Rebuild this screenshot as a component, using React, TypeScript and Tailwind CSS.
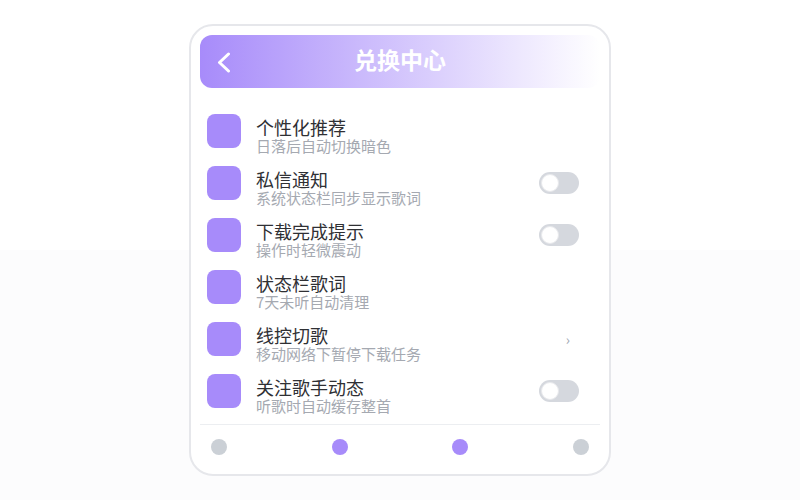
import React from "react";

type Row = { title: string; sub: string; kind: "none" | "toggle" | "chevron" };

const rows: Row[] = [
  { title: "个性化推荐", sub: "日落后自动切换暗色", kind: "none" },
  { title: "私信通知", sub: "系统状态栏同步显示歌词", kind: "toggle" },
  { title: "下载完成提示", sub: "操作时轻微震动", kind: "toggle" },
  { title: "状态栏歌词", sub: "7天未听自动清理", kind: "none" },
  { title: "线控切歌", sub: "移动网络下暂停下载任务", kind: "chevron" },
  { title: "关注歌手动态", sub: "听歌时自动缓存整首", kind: "toggle" },
];

function Toggle() {
  return (
    <div className="w-[40px] h-[22px] rounded-full bg-[#d5d8de] flex items-center px-[2px]">
      <div className="w-[18px] h-[18px] rounded-full bg-white border border-[#e8e9ec]" />
    </div>
  );
}

export default function App() {
  return (
    <div
      className="w-[800px] h-[500px] flex justify-center pt-[24px] bg-[linear-gradient(to_bottom,#ffffff_250px,#fcfcfd_250px)]"
      style={{ fontFamily: '"Noto Sans CJK SC", "Noto Sans", sans-serif' }}
    >
      <div className="w-[422px] h-[452px] border-2 border-[#e6e7eb] rounded-[24px] bg-white p-[9px] flex flex-col">
        <div className="h-[53px] rounded-[12px] bg-[linear-gradient(to_right,#a78bfa,#ffffff)] flex items-center relative">
          <svg className="absolute left-[17px] top-[17px]" width="14" height="21" viewBox="0 0 14 21" fill="none">
            <polyline points="11.5,2 2.5,10.5 11.5,19" stroke="white" strokeWidth="3" strokeLinecap="round" strokeLinejoin="round" />
          </svg>
          <div className="flex-1 text-center text-white font-bold text-[23px] leading-none pb-[4px]">兑换中心</div>
        </div>
        <div className="mt-[17px] flex flex-col">
          {rows.map((r) => (
            <div key={r.title} className="h-[52px] flex items-center pl-[7px] pr-[21px]">
              <div className="w-[34px] h-[34px] rounded-[8px] bg-[#a78bfa] shrink-0" />
              <div className="ml-[15px] flex-1 flex flex-col pt-[9px]">
                <div className="text-[18px] leading-[20px] text-[#2f3034]">{r.title}</div>
                <div className="text-[15px] leading-[18px] text-[#a5a9b1]">{r.sub}</div>
              </div>
              {r.kind === "toggle" && <Toggle />}
              {r.kind === "chevron" && (
                <div className="mr-[9px] text-[14px] leading-none text-[#9ca3af]">›</div>
              )}
            </div>
          ))}
        </div>
        <div className="mt-[7px] border-t border-[#eceef1]" />
        <div className="flex justify-between px-[11px] pt-[14px]">
          <div className="w-[16px] h-[16px] rounded-full bg-[#cbd0d6]" />
          <div className="w-[16px] h-[16px] rounded-full bg-[#a78bfa]" />
          <div className="w-[16px] h-[16px] rounded-full bg-[#a78bfa]" />
          <div className="w-[16px] h-[16px] rounded-full bg-[#cbd0d6]" />
        </div>
      </div>
    </div>
  );
}
